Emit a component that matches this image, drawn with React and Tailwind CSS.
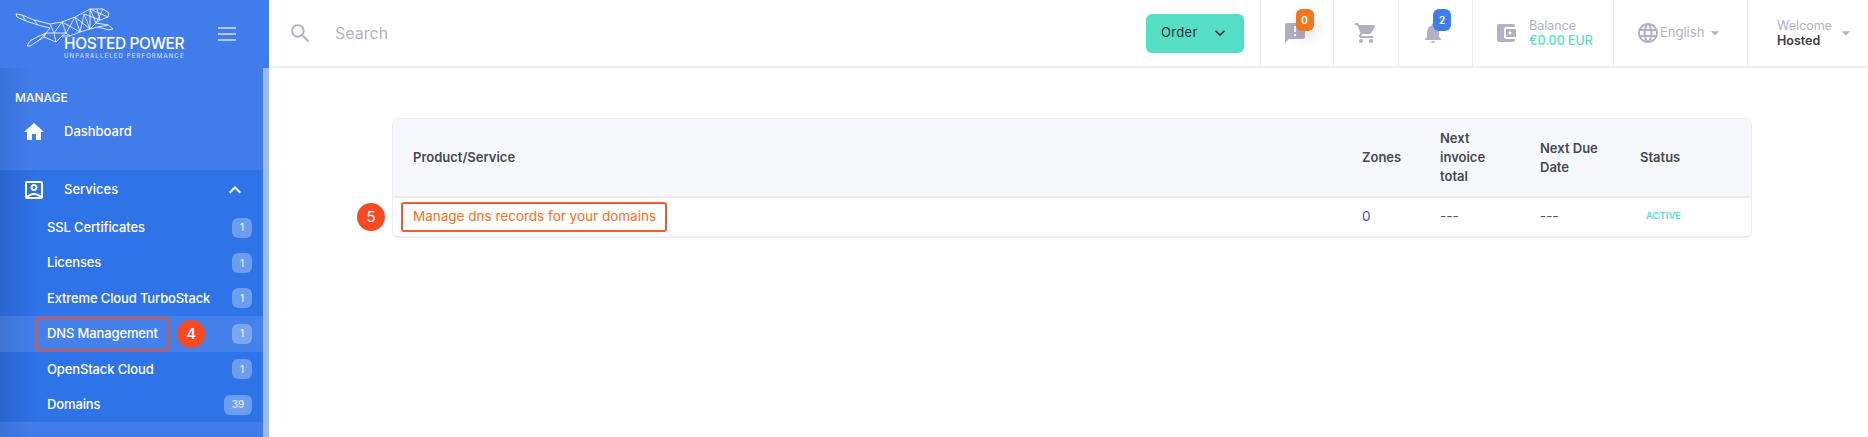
import React from 'react'
import {
  MdHome,
  MdOutlineAccountBox,
  MdExpandLess,
  MdExpandMore,
  MdSearch,
  MdAnnouncement,
  MdShoppingCart,
  MdNotifications,
  MdAccountBalanceWallet,
  MdLanguage,
  MdArrowDropDown,
} from 'react-icons/md'

const serviceLinks = [
  { name: 'SSL Certificates', count: 1 },
  { name: 'Licenses', count: 1 },
  { name: 'Extreme Cloud TurboStack', count: 1 },
  { name: 'DNS Management', count: 1, active: true },
  { name: 'OpenStack Cloud', count: 1 },
  { name: 'Domains', count: 39 },
]

const Cheetah = () => (
  <svg viewBox="0 0 130 70" className="w-[130px] h-[70px]" fill="none" stroke="#ffffff" strokeWidth="0.8" strokeLinejoin="round">
    <path d="M16 14 L22 15 L34 20 L50 24 L62 22 L75 17 L90 9 L103 9 L109 13 L108 17 L100 20 L96 23 L108 25 L113 29 L109 30 L98 27 L90 29 L80 32 L70 36 L62 36 L56 42 L44 37 L38 41 L30 46 L27 46 L30 41 L37 37 L46 33 L50 28 L38 25 L26 21 L17 17 Z" />
    <path d="M50 24 L54 33 L62 22 L66 33 L75 17 L80 32 L84 14 L90 29 L90 9 L96 23 L103 9 M54 33 L46 33 M66 33 L54 33 M66 33 L70 36 M62 22 L80 32 M75 17 L90 29 M84 14 L100 20 M90 9 L108 17 M34 20 L38 25 M26 21 L22 15 M44 37 L46 33 M54 33 L56 42 M96 23 L90 29 M108 25 L98 27 M38 41 L46 33 M97 9 L100 20 M62 36 L66 33" />
  </svg>
)

const Badge = ({ children }) => (
  <span className="w-5 h-5 rounded-[6px] bg-white/30 flex items-center justify-center text-[10px] font-medium text-white/80">
    {children}
  </span>
)

const Marker = ({ children }) => (
  <span className="w-7 h-7 rounded-full bg-[#fa4a24] flex items-center justify-center text-[15px] text-white shrink-0">
    {children}
  </span>
)

const Sidebar = () => (
  <aside className="w-[269px] h-[437px] shrink-0 flex flex-col overflow-hidden text-white bg-[#417ceb]">
    <div className="relative h-[68px] shrink-0">
      <Cheetah />
      <div className="absolute left-[64px] top-[36px] leading-none">
        <p className="text-[15.5px] font-medium tracking-tight leading-[15px] whitespace-nowrap">HOSTED POWER</p>
        <p className="text-[6px] tracking-[0.19em] leading-[8px] mt-[1px] whitespace-nowrap text-white/80">UNPARALLELED PERFORMANCE</p>
      </div>
      <div className="absolute left-[218px] top-[27px] w-[18px] flex flex-col gap-[4px]">
        <span className="h-[2px] bg-white/60" />
        <span className="h-[2px] bg-white/60" />
        <span className="h-[2px] bg-white/60" />
      </div>
    </div>

    <div className="flex flex-1 min-h-0">
      <div className="flex-1 min-w-0 bg-gradient-to-r from-[#3a72da] to-[#417ceb] to-[12%]">
        <p className="pl-[15px] pt-[23px] text-[12px] leading-[14px] font-medium">MANAGE</p>
        <div className="flex items-center h-[30px] mt-[12px] pl-[22px]">
          <MdHome className="w-[24px] h-[24px]" />
          <span className="ml-[18px] text-[13px] font-medium">Dashboard</span>
        </div>
        <div className="mt-[23px] h-[252px] bg-gradient-to-r from-[#2a66d0] to-[#2f73e8] to-[15%]">
          <div className="flex items-center h-[40px] pl-[22px] pr-[16px]">
            <MdOutlineAccountBox className="w-[24px] h-[24px]" />
            <span className="ml-[18px] text-[13px] font-medium flex-1">Services</span>
            <MdExpandLess className="w-[24px] h-[24px]" />
          </div>
          <ul>
            {serviceLinks.map((link) => (
              <li
                key={link.name}
                className={`relative flex items-center h-[35.4px] pl-[47px] pr-[11px] text-[13px] font-medium tracking-[-0.01em] ${link.active ? 'bg-white/10' : ''}`}
              >
                <span className="flex-1 whitespace-nowrap">{link.name}</span>
                {link.active && (
                  <>
                    <span className="absolute left-[36px] top-[1px] w-[133px] h-[34px] border-2 rounded-[3px] border-[#e2553a]" />
                    <span className="absolute left-[177px] top-[4px]">
                      <Marker>4</Marker>
                    </span>
                  </>
                )}
                {link.count > 9 ? (
                  <span className="w-7 h-5 rounded-[6px] bg-white/30 flex items-center justify-center text-[10px] font-medium text-white/80">
                    {link.count}
                  </span>
                ) : (
                  <Badge>{link.count}</Badge>
                )}
              </li>
            ))}
          </ul>
        </div>
      </div>
      <div className="w-[6px] bg-[#9ebaf5]" />
    </div>
  </aside>
)

const HeaderCell = ({ className = '', children }) => (
  <div className={`h-full flex items-center border-l border-[#eceef2] ${className}`}>{children}</div>
)

const Header = () => (
  <header className="h-[68px] shrink-0 flex items-center border-b-2 border-[#eeeff3]">
    <MdSearch className="ml-[19px] w-[25px] h-[25px] text-[#b2b4c6]" />
    <span className="ml-[22px] flex-1 text-[16px] text-[#b2b4c6]">Search</span>

    <button className="mr-[16px] w-[98px] h-[39px] rounded-[6px] bg-[#54dfc4] flex items-center pl-[15px] text-[13px] tracking-wide text-[#2a2f3c]">
      Order
      <MdExpandMore className="ml-[12px] w-[20px] h-[20px]" />
    </button>

    <HeaderCell className="w-[73px] justify-center pr-[5px]">
      <span className="relative">
        <MdAnnouncement className="w-[24px] h-[24px] text-[#b0b2c3]" />
        <span className="absolute -top-[12px] left-[13px] w-[18px] h-[22px] rounded-[6px] bg-[#f07720] shadow-[0_6px_14px_rgba(60,60,80,0.18)] flex items-center justify-center text-[10px] font-semibold text-white">0</span>
      </span>
    </HeaderCell>
    <HeaderCell className="w-[65px] justify-center">
      <MdShoppingCart className="w-[24px] h-[24px] text-[#b0b2c3]" />
    </HeaderCell>
    <HeaderCell className="w-[74px] justify-center pr-[5px]">
      <span className="relative">
        <MdNotifications className="w-[24px] h-[24px] text-[#b0b2c3]" />
        <span className="absolute -top-[12px] left-[12px] w-[18px] h-[22px] rounded-[6px] bg-[#417ceb] flex items-center justify-center text-[10px] font-semibold text-white">2</span>
      </span>
    </HeaderCell>
    <HeaderCell className="w-[141px] pl-[21px]">
      <MdAccountBalanceWallet className="w-[24px] h-[24px] text-[#b0b2c3]" />
      <div className="ml-[11px] leading-[15px]">
        <p className="text-[12.5px] text-[#b0b2c3]">Balance</p>
        <p className="text-[12.5px] font-medium text-[#54dfc4]">€0.00 EUR</p>
      </div>
    </HeaderCell>
    <HeaderCell className="w-[134px] pl-[22px]">
      <MdLanguage className="w-[24px] h-[24px] text-[#b0b2c3]" />
      <span className="text-[13px] text-[#b0b2c3]">English</span>
      <MdArrowDropDown className="ml-[1px] w-[20px] h-[20px] text-[#b0b2c3]" />
    </HeaderCell>
    <HeaderCell className="w-[121px] pl-[29px]">
      <div className="leading-[15px]">
        <p className="text-[12.5px] text-[#b0b2c3]">Welcome</p>
        <p className="text-[12.5px] font-semibold text-[#3a3d48]">Hosted</p>
      </div>
      <MdArrowDropDown className="ml-[4px] w-[20px] h-[20px] text-[#b0b2c3]" />
    </HeaderCell>
  </header>
)

const tableCols = 'grid grid-cols-[969px_78px_100px_100px_1fr]'

const ServiceTable = () => (
  <div className="relative mt-[50px] ml-[123px] mr-[116px] rounded-[6px] border border-[#eceef2] border-b-2">
    <div className={`${tableCols} h-[79px] items-center bg-[#f7f8fb] border-b-2 border-[#eceef2] rounded-t-[6px] text-[13px] leading-[19px] font-semibold text-[#464853]`}>
      <span className="pl-[20px]">Product/Service</span>
      <span>Zones</span>
      <span className="w-[60px]">Next invoice total</span>
      <span className="w-[80px]">Next Due Date</span>
      <span>Status</span>
    </div>
    <div className={`${tableCols} h-[38px] pb-[2px] items-center text-[13.5px] leading-[20px] text-[#41557f]`}>
      <span className="relative pl-[20px] text-[#f0701f] whitespace-nowrap">
        Manage dns records for your domains
        <span className="absolute left-[8px] -top-[4px] w-[266px] h-[30px] rounded-[3px] border-2 border-[#ef5a38]" />
        <span className="absolute -left-[36px] -top-[3px]">
          <Marker>5</Marker>
        </span>
      </span>
      <span>0</span>
      <span>---</span>
      <span>---</span>
      <span className="pl-[6px] text-[9.5px] font-semibold text-[#54dfc4]">ACTIVE</span>
    </div>
  </div>
)

export default function App() {
  return (
    <div className="flex w-[1868px] h-[437px] overflow-hidden bg-white font-['Inter',sans-serif]">
      <Sidebar />
      <main className="flex-1 min-w-0 flex flex-col">
        <Header />
        <ServiceTable />
      </main>
    </div>
  )
}
